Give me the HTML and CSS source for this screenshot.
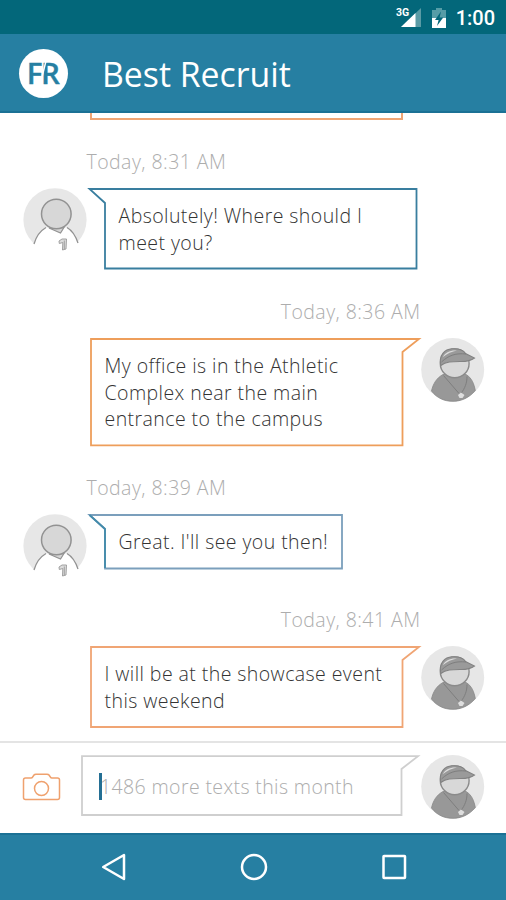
FILE: index.html
```html
<!DOCTYPE html>
<html lang="en">
<head>
<meta charset="utf-8">
<title>Best Recruit</title>
<link rel="stylesheet" href="styles.css">
</head>
<body>
<svg class="defs" aria-hidden="true">
  <symbol id="player" viewBox="0 0 64 64">
    <circle cx="32" cy="31.8" r="31.6" fill="#e7e7e7"/>
    <path d="M11 56C13 49 17 43 23 39.5H44C50 43 53 49 55 55L51 64H14Z" fill="#fff"/>
    <path d="M11 56C13 49 17 43 23 39.5M44 39.5C50 43 53 49 55 55" fill="none" stroke="#929292" stroke-width="1.3"/>
    <path d="M26 40L37.5 45L41 39.5Z" fill="#d6d6d6" stroke="#929292" stroke-width="1.2"/>
    <circle cx="33.3" cy="26" r="14.8" fill="#d7d7d7" stroke="#929292" stroke-width="1.5"/>
    <path d="M36 53L39 51H43.5L43 61L39.5 62L39.8 54.5L36.3 55.5ZM41.3 52.5V61" fill="#ddd" stroke="#999" stroke-width=".9"/>
  </symbol>
  <symbol id="coach" viewBox="0 0 64 64">
    <circle cx="31.7" cy="31.6" r="31.5" fill="#e7e7e7"/>
    <path d="M10.5 53C12 46 15.5 40 22 36.5H45C51 40 53 46 54.3 52.5C48 60 40 63.3 32 63.3C23 63.3 16 60 10.5 53Z" fill="#989898" stroke="#868686" stroke-width=".8"/>
    <circle cx="33.7" cy="25.4" r="14.4" fill="#d8d8d8" stroke="#8a8a8a" stroke-width="1.4"/>
    <path d="M19.8 27.5C17.5 17 24 11.2 31 10.8C37 10.4 42 11.5 44.5 15.5L53.5 20C50 22.7 45 23.6 39 23.5C31 23.5 25 23.6 19.8 27.5Z" fill="#9a9a9a" stroke="#828282" stroke-width="1.1"/>
    <path d="M22 19C24 14.5 29 12 36 12.5C31 13.5 26 15.5 22 19Z" fill="#ddd"/>
    <path d="M20.5 24C28 17 35 15 45 16" fill="none" stroke="#7e7e7e"/>
    <path d="M22.5 37.5L38 55.5M46 38.5C46 45 44 50 40 55.5" fill="none" stroke="#7e7e7e"/>
    <path d="M37 57L40 54.5L43.5 57L41.5 60H38.5Z" fill="#dedede"/>
  </symbol>
</svg>
<div class="screen">
  <div class="status">
    <svg class="signal" width="27" height="22" viewBox="0 0 27 22">
      <path d="M6 20L26 1V20Z" fill="#5a9ba5"/><path d="M6 20L20.5 6V20Z" fill="#fff"/>
      <text class="net" x="1" y="9">3G</text>
    </svg>
    <svg class="battery" width="14" height="20" viewBox="0 0 14 20">
      <path d="M0 2H4V0H10V2H14V20H0Z" fill="#569da7"/>
      <path d="M0 10H14V20H0Z" fill="#fff"/>
      <path d="M9 3.5L3 12H6.6L5 18L11.2 9.5H7.6Z" fill="#03677a"/>
    </svg>
    <span class="clock">1:00</span>
  </div>
  <header class="header">
    <div class="logo"><span class="logo-text">FR</span>
      <svg class="slash" width="10" height="26" viewBox="0 0 10 26"><path d="M8 1L2 25" stroke="#fff" stroke-width="1.4"/></svg>
    </div>
    <h1 class="title">Best Recruit</h1>
  </header>
  <main class="chat">
    <div class="previous"></div>
    <time class="time">Today, 8:31 AM</time>
    <div class="row in">
      <svg class="avatar"><use href="#player"/></svg>
      <div class="bubble"><svg class="outline" width="332" height="82"><path d="M2.5 1H329.5V80.5H18V15Z" stroke="#397e9f"/></svg>Absolutely! Where should I<br>meet you?</div>
    </div>
    <time class="time right">Today, 8:36 AM</time>
    <div class="row out">
      <div class="bubble tall"><svg class="outline" width="332" height="109"><path d="M1 1H329L312.5 14V107.3H1Z" stroke="#ee9e5b"/></svg>My office is in the Athletic<br>Complex near the main<br>entrance to the campus</div>
      <svg class="avatar"><use href="#coach"/></svg>
    </div>
    <time class="time">Today, 8:39 AM</time>
    <div class="row in">
      <svg class="avatar"><use href="#player"/></svg>
      <div class="bubble"><svg class="outline" width="332" height="57"><path d="M2.5 1H255V54.5H18V15Z" stroke="#7b9fbc"/><path d="M2.5 1L18 15V54" stroke="#438bab"/></svg>Great. I'll see you then!</div>
    </div>
    <time class="time right">Today, 8:41 AM</time>
    <div class="row out">
      <div class="bubble"><svg class="outline" width="332" height="83"><path d="M1 1H329L312.5 14V81H1Z" stroke="#f0a574"/></svg>I will be at the showcase event<br>this weekend</div>
      <svg class="avatar"><use href="#coach"/></svg>
    </div>
  </main>
  <footer class="composer">
    <svg class="camera" width="40" height="30" viewBox="0 0 40 30"><path d="M3.5 5H9Q10 5 11 3.5L12 2Q12.5 1.3 14 1.3H25Q26.5 1.3 27 2L28 3.5Q29 5 30 5H35.5Q37.5 5 37.5 7V24.5Q37.5 26.5 35.5 26.5H3.5Q1.5 26.5 1.5 24.5V7Q1.5 5 3.5 5Z"/><circle cx="19.5" cy="15.5" r="7"/></svg>
    <div class="field">
      <svg class="outline" width="340" height="62"><path d="M1 1.2H337L320.5 14V60H1Z" stroke="#cfcfcf"/></svg>
      <span class="caret"></span><span class="hint">1486 more texts this month</span>
    </div>
    <svg class="avatar"><use href="#coach"/></svg>
  </footer>
  <nav class="nav">
    <svg width="28" height="30" viewBox="0 0 28 30"><path d="M24 3V27L3.2 15Z"/></svg>
    <svg width="28" height="30" viewBox="0 0 28 30"><circle cx="14" cy="15" r="12"/></svg>
    <svg width="28" height="30" viewBox="0 0 28 30"><rect x="3.5" y="4" width="21.5" height="22" rx=".5"/></svg>
  </nav>
</div>
</body>
</html>
```
FILE: styles.css
```css
* { box-sizing: border-box; }
body { margin: 0; font-family: "Open Sans", sans-serif; background: #fff; }
.defs { position: absolute; width: 0; height: 0; }
.screen { width: 506px; height: 900px; display: flex; flex-direction: column; overflow: hidden; }
.status { height: 34px; background: #03677a; display: flex; align-items: flex-start; justify-content: flex-end; padding: 7px 11px 0 0; }
.signal { margin-right: 10px; }
.battery { margin-top: 1px; margin-right: 10px; }
.net { font: 700 10.5px Roboto, sans-serif; fill: #fff; }
.clock { font: 500 20px/22px Roboto, sans-serif; color: #fff; }
.header { height: 79px; background: #267fa2; border-bottom: 2px solid #1b7195; display: flex; align-items: center; padding: 2px 0 0 19px; }
.logo { position: relative; width: 49px; height: 49px; border-radius: 50%; background: #fff; color: #267fa2; display: flex; justify-content: center; align-items: center; padding-right: 2px; }
.logo-text { font: 600 29.5px/47px "Open Sans", sans-serif; letter-spacing: -1.5px; margin-top: -2px; -webkit-text-stroke: .4px #267fa2; }
.slash { position: absolute; left: 19px; top: 11px; }
.title { margin: 0 0 0 34px; color: #fff; font-size: 33.8px; font-weight: 400; line-height: 50px; }
.chat { height: 628px; display: flex; flex-direction: column; overflow: hidden; }
.previous { flex: none; width: 313px; height: 7px; margin: 0 0 28px 90px; border: 2px solid #f0a574; border-top: 0; }
.time { flex: none; height: 27px; margin: 0 0 13px 86.5px; font-size: 19.5px; font-weight: 300; letter-spacing: .45px; line-height: 27px; color: #adadad; white-space: nowrap; }
.time.right { margin-left: 0; margin-right: 85.5px; text-align: right; }
.row { flex: none; display: flex; align-items: flex-start; margin-bottom: 28px; }
.row.in { padding-left: 23px; }
.row.out { padding-left: 90px; }
.avatar { flex: none; width: 64px; height: 64px; }
.bubble { position: relative; width: 331px; padding: 14px 0 14px 14.5px; font-size: 19.5px; font-weight: 300; letter-spacing: .43px; line-height: 27px; color: #333; white-space: nowrap; }
.bubble.tall { padding-top: 15px; padding-bottom: 13px; line-height: 26.7px; }
.in .bubble { padding-left: 31.5px; }
.outline { position: absolute; left: 0; top: 0; fill: none; stroke-width: 1.8; }
.composer { height: 92px; border-top: 2px solid #e4e4e4; display: flex; align-items: flex-start; padding: 12px 0 0 22px; }
.camera { margin: 18px 19px 0 0; fill: none; stroke: #efa16e; stroke-width: 1.5; }
.field { position: relative; width: 340px; height: 62px; display: flex; align-items: center; padding-left: 18px; }
.caret { width: 3px; height: 27px; background: #246f94; }
.hint { margin-left: -2px; font-size: 19.5px; font-weight: 300; letter-spacing: .38px; color: #adadad; white-space: nowrap; }
.nav { height: 67px; background: #267fa2; border-top: 2px solid #1b7195; display: flex; align-items: center; justify-content: center; gap: 112px; padding: 0 0 2px 1px; }
.nav svg { fill: none; stroke: #fff; stroke-width: 2.5; stroke-linejoin: round; }
```
